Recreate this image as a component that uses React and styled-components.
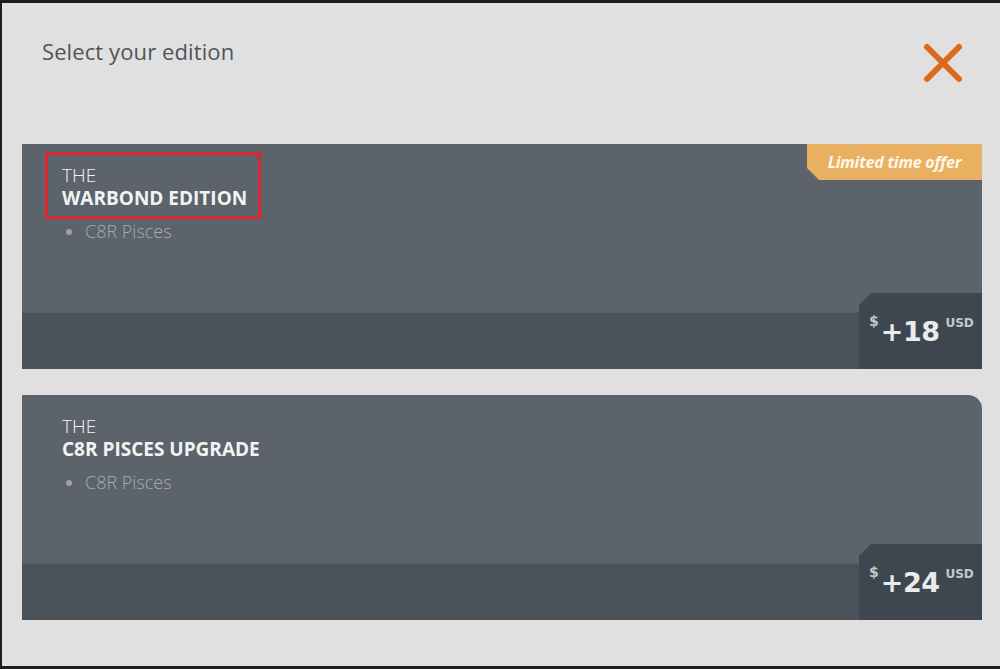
import React from 'react'
import styled, { createGlobalStyle } from 'styled-components'

const GlobalStyle = createGlobalStyle`
  html, body {
    margin: 0;
    padding: 0;
    background: #1c1d1f;
  }
  body {
    font-family: "Open Sans", "Liberation Sans", sans-serif;
  }
`

const editions = [
  { name: 'WARBOND EDITION', items: ['C8R Pisces'], price: 18, offer: true, marked: true },
  { name: 'C8R PISCES UPGRADE', items: ['C8R Pisces'], price: 24, offer: false, marked: false },
]

function CloseIcon() {
  return (
    <svg width="42" height="42" viewBox="0 0 42 42">
      <path d="M5 5 L37 37 M37 5 L5 37" stroke="#e0681c" strokeWidth="6" strokeLinecap="round" fill="none" />
    </svg>
  )
}

function Edition({ edition }) {
  return (
    <Card $rounded={!edition.offer}>
      <CardBody>
        <Title $marked={edition.marked}>
          <Small>THE</Small>
          <Name>{edition.name}</Name>
        </Title>
        <Items>
          {edition.items.map((item) => (
            <Item key={item}>{item}</Item>
          ))}
        </Items>
      </CardBody>
      <CardFooter />
      {edition.offer && <Badge>Limited time offer</Badge>}
      <Price>
        <Dollar>$</Dollar>
        <Amount>+{edition.price}</Amount>
        <Currency>USD</Currency>
      </Price>
    </Card>
  )
}

export default function App() {
  return (
    <>
      <GlobalStyle />
      <Modal>
        <Header>
          <Heading>Select your edition</Heading>
          <CloseButton aria-label="Close">
            <CloseIcon />
          </CloseButton>
        </Header>
        <List>
          {editions.map((e) => (
            <Edition key={e.name} edition={e} />
          ))}
        </List>
      </Modal>
    </>
  )
}

const Modal = styled.div`
  margin: 3px 0 0 2px;
  height: 663px;
  background: #e0e0e0;
  padding: 0 18px 0 20px;
  box-sizing: border-box;
`

const Header = styled.div`
  display: flex;
  justify-content: space-between;
  align-items: flex-start;
  height: 141px;
  padding: 33px 0 0 20px;
  box-sizing: border-box;
`

const Heading = styled.h1`
  margin: 0;
  font-size: 22px;
  font-weight: 400;
  color: #505459;
  letter-spacing: 0.1px;
`

const CloseButton = styled.button`
  border: none;
  background: none;
  padding: 0;
  margin: 6px 18px 0 0;
  cursor: pointer;
  display: flex;
`

const List = styled.div`
  display: flex;
  flex-direction: column;
  gap: 26px;
`

const Card = styled.div`
  position: relative;
  height: 225px;
  display: flex;
  flex-direction: column;
  background: #5c636a;
  border-top-right-radius: ${(p) => (p.$rounded ? '14px' : '0')};
  overflow: hidden;
`

const CardBody = styled.div`
  flex: 1;
  padding: 8px 0 0 23px;
`

const Title = styled.div`
  display: inline-flex;
  flex-direction: column;
  padding: 8px 11px 6px 14px;
  border: 3px solid ${(p) => (p.$marked ? '#e1232b' : 'transparent')};
`

const Small = styled.span`
  font-size: 19px;
  font-weight: 300;
  color: #f2f3f4;
  line-height: 24px;
`

const Name = styled.span`
  font-size: 19px;
  font-weight: 700;
  color: #f2f3f4;
  line-height: 23px;
`

const Items = styled.ul`
  margin: 0;
  padding: 0 0 0 21px;
  list-style: none;
`

const Item = styled.li`
  position: relative;
  font-size: 18px;
  font-weight: 300;
  color: #a6acb1;
  line-height: 24px;
  padding-left: 19px;
  &::before {
    content: '';
    position: absolute;
    left: 0;
    top: 10px;
    width: 6px;
    height: 6px;
    border-radius: 50%;
    background: #9aa0a6;
  }
`

const CardFooter = styled.div`
  height: 56px;
  background: #4b535a;
  border-top: 1px solid #565d64;
`

const Badge = styled.div`
  position: absolute;
  top: 0;
  right: 0;
  width: 175px;
  height: 36px;
  background: #e9b062;
  color: #fff7ea;
  font-size: 16px;
  font-weight: 700;
  font-style: italic;
  letter-spacing: -0.2px;
  display: flex;
  align-items: center;
  justify-content: center;
  clip-path: polygon(0 0, 100% 0, 100% 100%, 12px 100%, 0 24px);
`

const Price = styled.div`
  position: absolute;
  right: 0;
  bottom: 0;
  width: 123px;
  height: 76px;
  background: #3e4750;
  clip-path: polygon(12px 0, 100% 0, 100% 100%, 0 100%, 0 12px);
  display: flex;
  align-items: flex-start;
  padding: 20px 0 0 10px;
  box-sizing: border-box;
  color: #e9ebed;
  font-family: "DejaVu Sans", "Open Sans", sans-serif;
`

const Dollar = styled.span`
  font-size: 14px;
  font-weight: 700;
  color: #c3c8cd;
  line-height: 16px;
`

const Amount = styled.span`
  font-size: 27px;
  font-weight: 700;
  line-height: 36px;
  margin: 1px 6px 0 2px;
  letter-spacing: -0.5px;
`

const Currency = styled.span`
  font-size: 12px;
  font-weight: 700;
  color: #c3c8cd;
  line-height: 16px;
  margin-top: 2px;
`
